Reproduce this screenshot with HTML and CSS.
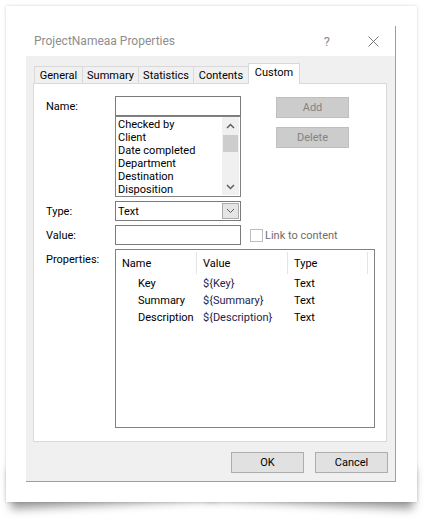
FILE: index.html
```html
<!DOCTYPE html>
<html>
<head>
<meta charset="utf-8">
<link rel="stylesheet" href="styles.css">
</head>
<body>
<div class="card">
  <div class="window">
    <div class="titlebar">
      <span class="title">ProjectNameaa Properties</span>
      <span class="help">?</span>
      <svg class="close" width="11" height="11" viewBox="0 0 11 11"><path d="M0.5 0.5 L10.5 10.5 M10.5 0.5 L0.5 10.5" stroke="#7a7a7a" stroke-width="1" fill="none"/></svg>
    </div>
    <div class="body">
      <div class="tabs">
        <div class="tab w-general">General</div>
        <div class="tab w-summary">Summary</div>
        <div class="tab w-stats">Statistics</div>
        <div class="tab w-contents">Contents</div>
        <div class="tab active w-custom">Custom</div>
      </div>
      <div class="panel">
        <div class="grid">
          <div class="lbl">Name:</div>
          <div class="namecol">
            <div class="textbox"></div>
            <div class="listbox">
              <div class="items">
                <div>Checked by</div>
                <div>Client</div>
                <div>Date completed</div>
                <div>Department</div>
                <div>Destination</div>
                <div>Disposition</div>
              </div>
              <div class="vscroll">
                <div class="arrow"><svg width="9" height="6" viewBox="0 0 9 6"><path d="M1 5 L4.5 1.5 L8 5" stroke="#606060" stroke-width="1.5" fill="none"/></svg></div>
                <div class="track"><div class="thumb"></div></div>
                <div class="arrow"><svg width="9" height="6" viewBox="0 0 9 6"><path d="M1 1 L4.5 4.5 L8 1" stroke="#606060" stroke-width="1.5" fill="none"/></svg></div>
              </div>
            </div>
          </div>
          <div class="gapcol"></div>
          <div class="btncol">
            <div class="btn disabled">Add</div>
            <div class="btn disabled">Delete</div>
          </div>

          <div class="lbl">Type:</div>
          <div class="combo">
            <span class="combo-text">Text</span>
            <span class="combo-btn"><svg width="9" height="6" viewBox="0 0 9 6"><path d="M1 1 L4.5 4.5 L8 1" stroke="#606060" stroke-width="1" fill="none"/></svg></span>
          </div>
          <div class="gapcol"></div>
          <div></div>

          <div class="lbl">Value:</div>
          <div class="textbox"></div>
          <div class="gapcol"></div>
          <div class="check"><span class="box"></span><span class="check-text">Link to content</span></div>

          <div class="lbl">Properties:</div>
          <div class="listview">
            <div class="lv-head">
              <div class="c1">Name</div>
              <div class="c2">Value</div>
              <div class="c3">Type</div>
            </div>
            <div class="lv-row">
              <div class="c1">Key</div>
              <div class="c2 val">${Key}</div>
              <div class="c3">Text</div>
            </div>
            <div class="lv-row">
              <div class="c1">Summary</div>
              <div class="c2 val">${Summary}</div>
              <div class="c3">Text</div>
            </div>
            <div class="lv-row">
              <div class="c1">Description</div>
              <div class="c2 val">${Description}</div>
              <div class="c3">Text</div>
            </div>
          </div>
        </div>
      </div>
      <div class="footer">
        <div class="btn normal">OK</div>
        <div class="btn normal">Cancel</div>
      </div>
    </div>
  </div>
</div>
</body>
</html>
```

FILE: styles.css
```css
html {
  margin: 0;
  padding: 0;
  background: #fff;
}
body {
  margin: 0;
  padding: 0;
  font-family: Roboto, "Noto Sans", sans-serif;
  font-size: 11px;
  color: #000;
  width: 431px;
  height: 531px;
  overflow: hidden;
}
.card {
  position: relative;
  margin: 6px 0 0 6px;
  width: 411px;
  height: 496px;
  box-sizing: border-box;
  padding: 20px 0 0 20px;
  background: #fff;
  box-shadow: 0 0 3px rgba(0, 0, 0, 0.18);
}
.card::before,
.card::after {
  content: "";
  position: absolute;
  z-index: -1;
  bottom: 18px;
  width: 50%;
  height: 40px;
  box-shadow: 0 20px 10px rgba(0, 0, 0, 0.4);
}
.card::before {
  left: 3px;
  transform: rotate(-2.8deg);
}
.card::after {
  right: 3px;
  transform: rotate(2.8deg);
}
.window {
  width: 370px;
  height: 456px;
  box-sizing: border-box;
  border-right: 1px solid #9d9d9d;
  border-bottom: 1px solid #9d9d9d;
  display: flex;
  flex-direction: column;
}
.titlebar {
  height: 30px;
  flex: none;
  display: flex;
  align-items: center;
  padding-left: 8px;
  color: #8e8e8e;
  font-size: 12px;
}
.title {
  flex: 1;
}
.help {
  font-size: 13px;
  color: #8a8a8a;
  margin-right: 38px;
}
.close {
  margin-right: 16px;
}
.body {
  flex: 1;
  background: #f0f0f0;
  padding: 7px 0 0 7px;
}
.tabs {
  display: flex;
  align-items: flex-end;
  height: 20px;
  padding-left: 1px;
  position: relative;
  z-index: 1;
}
.tab {
  height: 17px;
  box-sizing: border-box;
  border: 1px solid #d9d9d9;
  border-bottom: none;
  margin-left: -1px;
  background: #f0f0f0;
  display: flex;
  justify-content: center;
  align-items: center;
  padding-top: 1px;
}
.tab.w-general { width: 49px; margin-left: 0; }
.tab.w-summary { width: 57px; }
.tab.w-stats { width: 56px; }
.tab.w-contents { width: 56px; }
.tab.active {
  width: 52px;
  height: 21px;
  margin-bottom: -1px;
  background: #fff;
  padding-top: 0;
  padding-bottom: 3px;
}
.panel {
  width: 354px;
  height: 359px;
  box-sizing: border-box;
  border: 1px solid #d9d9d9;
  background: #fff;
  padding: 12px 0 0 12px;
}
.grid {
  display: grid;
  grid-template-columns: 69px 126px 9px 125px;
  grid-template-rows: 101px 20px 20px 179px;
  row-gap: 4px;
}
.lbl {
  padding-top: 3px;
  line-height: 15px;
}
.textbox {
  height: 20px;
  box-sizing: border-box;
  border: 1px solid #7a7a7a;
  background: #fff;
}
.namecol {
  display: flex;
  flex-direction: column;
}
.listbox {
  height: 81px;
  box-sizing: border-box;
  border: 1px solid #828282;
  display: flex;
}
.items {
  flex: 1;
  padding: 1px 0 0 2px;
  line-height: 13px;
}
.vscroll {
  width: 17px;
  background: #f0f0f0;
  display: flex;
  flex-direction: column;
  margin: 0 1px 1px 0;
}
.arrow {
  height: 17px;
  display: flex;
  align-items: center;
  justify-content: center;
}
.track {
  flex: 1;
}
.thumb {
  margin: 1px 1px 0 1px;
  height: 17px;
  background: #cdcdcd;
}
.btncol {
  padding: 1px 0 0 26px;
  display: flex;
  flex-direction: column;
  gap: 9px;
}
.btn {
  width: 73px;
  height: 21px;
  box-sizing: border-box;
  display: flex;
  align-items: center;
  justify-content: center;
}
.btn.disabled {
  background: #cccccc;
  border: 1px solid #bfbfbf;
  color: #838383;
}
.btn.normal {
  background: #e1e1e1;
  border: 1px solid #adadad;
}
.combo {
  height: 20px;
  box-sizing: border-box;
  border: 1px solid #7a7a7a;
  display: flex;
  align-items: center;
  padding: 1px 1px 1px 2px;
}
.combo-text {
  flex: 1;
}
.combo-btn {
  width: 17px;
  height: 16px;
  box-sizing: border-box;
  border: 1px solid #acacac;
  background: #e5e5e5;
  display: flex;
  align-items: center;
  justify-content: center;
}
.check {
  display: flex;
  align-items: center;
  gap: 2px;
}
.box {
  width: 13px;
  height: 13px;
  box-sizing: border-box;
  border: 1px solid #bcbcbc;
  background: #fff;
}
.check-text {
  color: #6d6d6d;
}
.listview {
  grid-column: 2 / 5;
  border: 1px solid #828282;
  background: #fff;
  width: 260px;
  box-sizing: border-box;
}
.lv-head,
.lv-row {
  display: flex;
}
.lv-head {
  height: 25px;
  align-items: center;
  padding-top: 1px;
  box-sizing: border-box;
}
.lv-head > div {
  height: 22px;
  display: flex;
  align-items: center;
  box-sizing: border-box;
  border-right: 1px solid #e5e5e5;
}
.lv-row {
  height: 17px;
  line-height: 17px;
}
.c1 { width: 81px; padding-left: 6px; box-sizing: border-box; }
.c2 { width: 91px; padding-left: 6px; box-sizing: border-box; }
.c3 { width: 80px; padding-left: 6px; box-sizing: border-box; }
.lv-row .c1 { padding-left: 22px; }
.val { color: #1c2552; }
.footer {
  display: flex;
  justify-content: flex-end;
  gap: 11px;
  margin-top: 10px;
  padding-right: 7px;
}
```
